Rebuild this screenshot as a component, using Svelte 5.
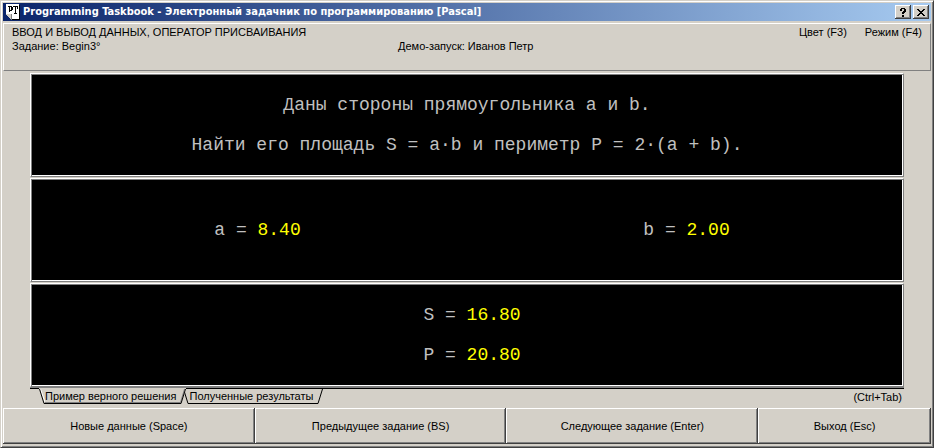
<script lang="ts">
	let title = 'Programming Taskbook - Электронный задачник по программированию [Pascal]';

	let inputs = [
		{ name: 'a', value: '8.40' },
		{ name: 'b', value: '2.00' }
	];
	let results = [
		{ name: 'S', value: '16.80' },
		{ name: 'P', value: '20.80' }
	];

	let tab = $state(0);
</script>

<div class="window">
	<div class="titlebar">
		<svg class="logo" width="16" height="16" viewBox="0 0 16 16" shape-rendering="crispEdges">
			<path d="M1 0h13v16H7L1 10z" fill="#fff" />
			<path d="M14 1h1v15h-1zM7 15h7v1H7z" fill="#000" />
			<path d="M1 10h5v5h-1v-1h-1v-1h-1v-1h-1v-1h-1z" fill="#d4d0c8" />
			<path d="M6 10h1v6h-1z" fill="#808080" />
			<path d="M3 2h4v1h1v3h-1v1h-2v1h-1v-5h-1zM5 3v3h1v-3z" fill="#000" fill-rule="evenodd" />
			<path d="M8 2h5v3h-1v-2h-1v6h1v1h-3v-1h1v-6h-2z" fill="#000" />
		</svg>
		<h1>{title}</h1>
		<button class="caption" aria-label="Справка">
			<svg width="8" height="9" viewBox="0 0 8 9" shape-rendering="crispEdges">
				<path d="M2 0h4v1h1v3h-1v1h-1v1h-2v-2h1v-1h1v-2h-2v2h-2v-2h1zM3 7h2v2h-2z" />
			</svg>
		</button>
		<button class="caption" aria-label="Закрыть">
			<svg width="8" height="7" viewBox="0 0 8 7" shape-rendering="crispEdges">
				<path d="M0 0h2v1h1v1h2v-1h1v-1h2v1h-1v1h-1v1h-1v1h1v1h1v1h1v1h-2v-1h-1v-1h-2v1h-1v1h-2v-1h1v-1h1v-1h1v-1h-1v-1h-1v-1h-1z" />
			</svg>
		</button>
	</div>

	<header>
		<div class="topic">
			<span>ВВОД И ВЫВОД ДАННЫХ, ОПЕРАТОР ПРИСВАИВАНИЯ</span>
			<span>Задание: Begin3°</span>
		</div>
		<div class="user">Демо-запуск: Иванов Петр</div>
		<div class="modes">
			<button>Цвет (F3)</button>
			<button>Режим (F4)</button>
		</div>
	</header>

	<main>
		<section class="panel lines">
			<p>Даны стороны прямоугольника a и b.</p>
			<p>Найти его площадь S = a·b и периметр P = 2·(a + b).</p>
		</section>
		<section class="panel pair values">
			{#each inputs as item}
				<p>{item.name} = <b>{item.value}</b></p>
			{/each}
		</section>
		<section class="panel lines values">
			{#each results as item}
				<p>{item.name} = <b>{item.value}</b></p>
			{/each}
		</section>

		<div class="tabs">
			{#each ['Пример верного решения', 'Полученные результаты'] as label, i}
				<button class="tab" class:active={tab === i} onclick={() => (tab = i)}>
					<svg width="6" height="15" viewBox="0 0 6 15">
						<path class="fill" d="M0 0L5 15H6V0z" />
						<path class="light" d="M1.500 0L6 13" />
						<path class="line" d="M.5 0L5 14.500H6" />
					</svg>
					<span>{label}</span>
					<svg width="6" height="15" viewBox="0 0 6 15">
						<path class="fill" d="M6 0L1 15H0V0z" />
						<path class="dark" d="M4.500 0L.5 13.500H0" />
						<path class="line" d="M5.500 0L1 14.500H0" />
					</svg>
				</button>
			{/each}
			<span class="hint">(Ctrl+Tab)</span>
		</div>
	</main>

	<footer>
		<button>Новые данные (Space)</button>
		<button>Предыдущее задание (BS)</button>
		<button>Следующее задание (Enter)</button>
		<button>Выход (Esc)</button>
	</footer>
</div>

<style>
	:global(body) {
		background: #d4d0c8;
	}

	.window {
		box-sizing: border-box;
		min-height: 100vh;
		display: flex;
		flex-direction: column;
		padding: 2px 2px 3px;
		border: 1px solid;
		border-color: #d4d0c8 #404040 #404040 #d4d0c8;
		box-shadow:
			inset 1px 1px #fff,
			inset -1px -1px #808080;
		background: #d4d0c8;
		color: #000;
		font-family: 'Liberation Sans', Arial, sans-serif;
		font-size: 11px;
		line-height: 14px;
	}

	button {
		margin: 0;
		padding: 0;
		border: 0;
		background: none;
		color: inherit;
		font: inherit;
	}

	.titlebar {
		display: flex;
		align-items: center;
		height: 18px;
		padding: 0 2px;
		background: linear-gradient(to right, #0a246a, #a6caf0);
	}

	.logo {
		margin-right: 2px;
	}

	h1 {
		flex: 1;
		margin: 0;
		color: #fff;
		font-family: 'DejaVu Sans Condensed', Tahoma, sans-serif;
		font-size: 11px;
		font-weight: bold;
		white-space: nowrap;
	}

	.caption {
		display: flex;
		align-items: center;
		justify-content: center;
		width: 16px;
		height: 14px;
		margin-left: 2px;
		background: #d4d0c8;
		box-shadow:
			inset -1px -1px #404040,
			inset 1px 1px #fff,
			inset -2px -2px #808080;
	}

	header {
		display: grid;
		grid-template-columns: 386px 1fr auto;
		height: 48px;
		box-sizing: border-box;
		margin-top: 2px;
		padding: 1px 8px;
		border: 1px solid;
		border-color: #fff #808080 #808080 #fff;
	}

	.topic {
		display: flex;
		flex-direction: column;
		white-space: nowrap;
	}

	.user {
		padding-top: 14px;
	}

	.modes {
		display: flex;
		align-items: flex-start;
		gap: 18px;
	}

	main {
		display: flex;
		flex: 1;
		flex-direction: column;
		gap: 1px;
		padding: 2px 27px 0;
	}

	.panel {
		box-sizing: border-box;
		flex: 1 0 104px;
		padding: 2px;
		background: #000;
		color: #c0c0c0;
		font-family: 'Liberation Mono', 'Courier New', monospace;
		font-size: 18px;
		line-height: 20px;
		border: 1px solid;
		border-color: #fff #808080 #808080 #fff;
		box-shadow:
			inset 1px 1px #808080,
			inset -1px -1px #fff;
	}

	.panel p {
		margin: 0;
	}

	.panel b {
		color: #ff0;
		font-weight: normal;
	}

	.lines {
		display: flex;
		flex-direction: column;
		align-items: center;
		justify-content: center;
		gap: 20px;
	}

	.pair {
		display: grid;
		grid-template-columns: 1fr 1fr;
		align-items: center;
		justify-items: center;
	}

	.values {
		padding-left: 12px;
	}

	.tabs {
		display: flex;
		align-items: flex-start;
		height: 19px;
		padding-left: 9px;
		border-top: 1px solid #000;
		box-shadow: 0 -1px #808080;
	}

	.tab {
		display: flex;
		height: 15px;
	}

	.tab + .tab {
		margin-left: -3px;
	}

	.tab span {
		box-sizing: border-box;
		height: 15px;
		padding-right: 4px;
		border-bottom: 1px solid #000;
	}

	.tab.active {
		z-index: 1;
		box-shadow: 0 -1px #d4d0c8;
	}

	.tab.active span {
		box-shadow: inset 0 -1px #808080;
	}

	.tab path {
		fill: none;
	}

	.tab .line {
		stroke: #000;
	}

	.tab.active .light {
		stroke: #fff;
	}

	.tab.active .dark {
		stroke: #808080;
	}

	.tab.active .fill {
		fill: #d4d0c8;
	}

	.hint {
		margin-left: auto;
		padding: 1px 2px 0 0;
	}

	footer {
		display: grid;
		grid-template-columns: 252fr 252fr 252fr 173fr;
	}

	footer button {
		height: 36px;
		box-shadow:
			inset -1px -1px #404040,
			inset 1px 1px #fff,
			inset -2px -2px #808080;
	}
</style>
